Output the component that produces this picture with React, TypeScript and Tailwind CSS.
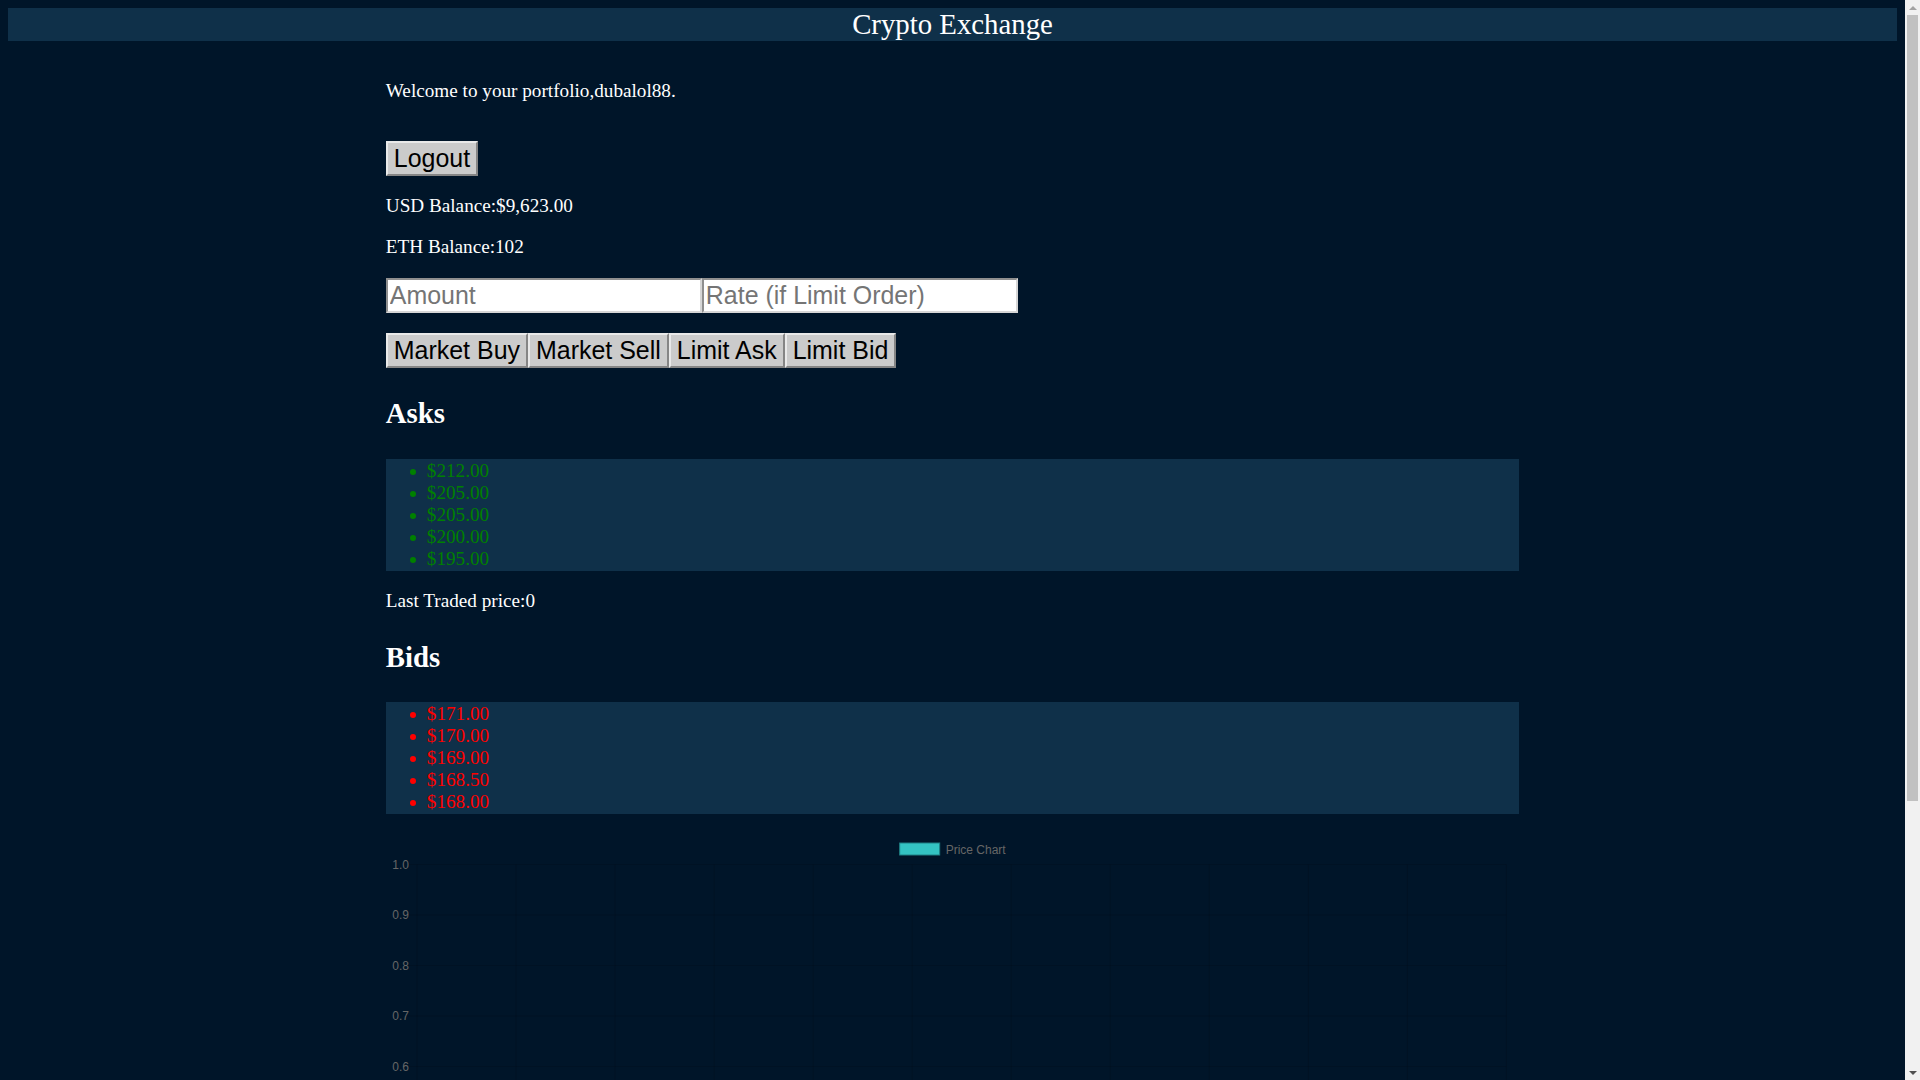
import React from "react"

const asks = ["$212.00", "$205.00", "$205.00", "$200.00", "$195.00"]
const bids = ["$171.00", "$170.00", "$169.00", "$168.50", "$168.00"]
const ticks = ["1.0", "0.9", "0.8", "0.7", "0.6", "0.5", "0.4", "0.3", "0.2", "0.1", "0.0"]

const btn =
  "h-[35px] bg-[#cbcbcb] px-[6px] py-[1px] font-['Liberation_Sans',Arial,sans-serif] text-[24.96px] leading-[normal] text-black border-2 border-t-[#e9e9e9] border-l-[#e9e9e9] border-b-[#858585] border-r-[#858585]"

const inputCls =
  "h-[35px] w-[316px] bg-white px-[2px] py-[1px] font-['Liberation_Sans',Arial,sans-serif] text-[24.96px] leading-[normal] text-black placeholder:text-[#757575] border-2 border-t-[#8f8f8f] border-l-[#8f8f8f] border-b-[#d6d6d6] border-r-[#d6d6d6] outline-none"

const PriceChart = () => {
  const left = 31
  const right = 1120
  const top = 31.5
  const step = 50.5
  return (
    <svg viewBox="0 0 1133 566" className="block w-full">
      <rect x="513.5" y="10" width="40" height="12" fill="#34c3c3" stroke="#1f7f84" strokeWidth="1" />
      <text x="559.5" y="20.5" fontSize="12" fill="#666" fontFamily="'Liberation Sans', Arial, sans-serif">
        Price Chart
      </text>
      {ticks.map((t, i) => (
        <g key={t}>
          <line x1={left - 10} x2={right} y1={top + i * step} y2={top + i * step} stroke="rgba(0,0,0,0.12)" strokeWidth="1" />
          <text
            x={left - 8}
            y={top + i * step + 4}
            fontSize="12"
            textAnchor="end"
            fill="#666"
            fontFamily="'Liberation Sans', Arial, sans-serif"
          >
            {t}
          </text>
        </g>
      ))}
      {Array.from({ length: 12 }).map((_, i) => (
        <line
          key={i}
          x1={left + i * 99}
          x2={left + i * 99}
          y1={top}
          y2={top + 10 * step + 10}
          stroke="rgba(0,0,0,0.12)"
          strokeWidth="1"
        />
      ))}
    </svg>
  )
}

const OrderList = ({ items, color }: { items: string[]; color: string }) => (
  <ul className={`bg-[#0f3049] py-px pl-[24px] ${color}`}>
    {items.map((p, i) => (
      <li key={i} className="flex items-center leading-[22px]">
        <span className="mr-[11px] h-[6px] w-[6px] translate-y-[1px] rounded-full bg-current" />
        {p}
      </li>
    ))}
  </ul>
)

// stand-in for the browser's page scrollbar seen in the screenshot
const Scrollbar = () => (
  <div className="flex h-screen w-[15px] shrink-0 flex-col items-center bg-[#f1f1f1]">
    <div className="flex h-[15px] items-center justify-center">
      <div className="h-0 w-0 border-x-[4px] border-b-[4px] border-x-transparent border-b-[#a3a3a3]" />
    </div>
    <div className="h-[786px] w-[11px] bg-[#c1c1c1]" />
    <div className="flex-1" />
    <div className="flex h-[15px] items-center justify-center">
      <div className="h-0 w-0 border-x-[4px] border-t-[4px] border-x-transparent border-t-[#505050]" />
    </div>
  </div>
)

export default function App() {
  return (
    <div className="flex h-screen overflow-hidden bg-[#001529]">
      <div className="min-w-0 flex-1 overflow-hidden">
        <div className="p-2 font-['Liberation_Serif','Times_New_Roman',serif] text-[19.2px] leading-[22px] text-white">
          <h1 className="bg-[#0f3049] text-center text-[28.8px] font-normal leading-[33px]">Crypto Exchange</h1>
          <div className="mx-auto w-[60%] pb-[24px]">
            <p className="mt-[38.5px]">Welcome to your portfolio,dubalol88.</p>
            <div className="mt-[39.5px] flex">
              <button className={btn}>Logout</button>
            </div>
            <p className="mt-[19.2px]">USD Balance:$9,623.00</p>
            <p className="mt-[19.2px]">ETH Balance:102</p>
            <div className="mt-[19.4px] flex">
              <input className={inputCls} placeholder="Amount" />
              <input className={inputCls} placeholder="Rate (if Limit Order)" />
            </div>
            <div className="mt-[20.5px] flex">
              <button className={btn}>Market Buy</button>
              <button className={btn}>Market Sell</button>
              <button className={btn}>Limit Ask</button>
              <button className={btn}>Limit Bid</button>
            </div>
            <h2 className="mt-[28.7px] text-[28.8px] font-bold leading-[33px]">Asks</h2>
            <div className="mt-[29.3px]">
              <OrderList items={asks} color="text-[#008000]" />
            </div>
            <p className="mt-[19.2px]">Last Traded price:0</p>
            <h2 className="mt-[28.3px] text-[28.8px] font-bold leading-[33px]">Bids</h2>
            <div className="mt-[28.5px]">
              <OrderList items={bids} color="text-[#ff0000]" />
            </div>
            <div className="mt-[19px]">
              <PriceChart />
            </div>
          </div>
        </div>
      </div>
      <Scrollbar />
    </div>
  )
}
